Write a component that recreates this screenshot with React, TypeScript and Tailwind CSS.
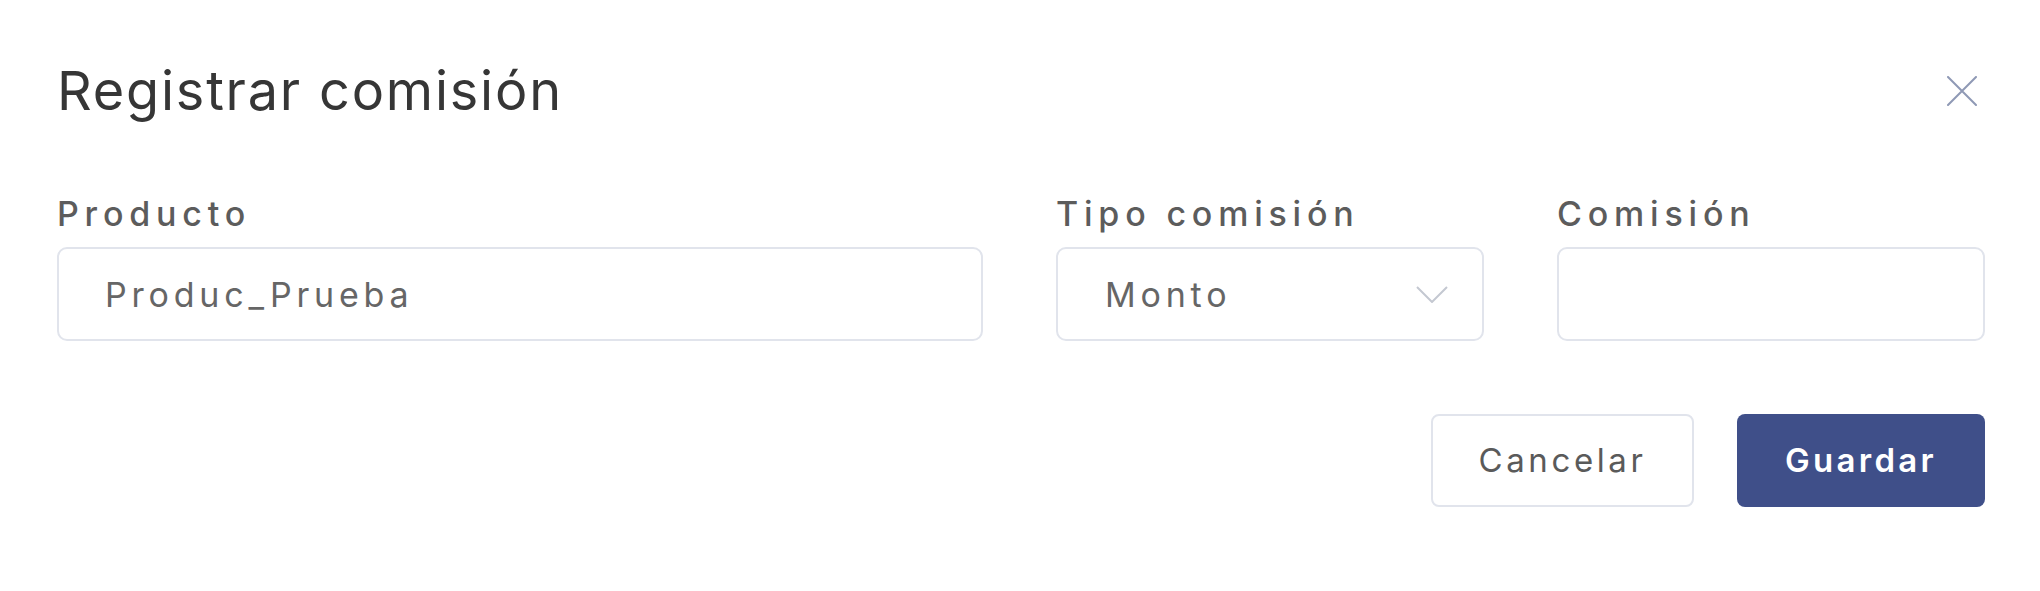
import React from "react";

export default function App() {
  const font = "font-['Inter','Noto_Sans',sans-serif]";
  return (
    <div className={`w-full h-[591px] bg-white pl-[57px] pr-[55px] pt-[59px] ${font}`}>
      <div className="flex items-center justify-between">
        <h1 className="text-[54px] leading-[64px] font-normal text-[#363636] tracking-[1.8px]">
          Registrar comisión
        </h1>
        <button className="w-[30px] h-[30px] mr-[8px] flex items-center justify-center" aria-label="Cerrar">
          <svg width="30" height="30" viewBox="0 0 30 30" fill="none">
            <path d="M1 1L29 29M29 1L1 29" stroke="#8f99b5" strokeWidth="2" strokeLinecap="round" />
          </svg>
        </button>
      </div>

      <div className="mt-[71px] grid grid-cols-[1fr_428px_428px] gap-x-[73px]">
        <div className="flex flex-col">
          <label className="text-[34px] leading-[40px] font-medium text-[#5c5c5c] tracking-[5.8px]">Producto</label>
          <div className="mt-[13px] h-[94px] rounded-[10px] border-2 border-[#e1e4ec] flex items-center pl-[46px]">
            <span className="text-[34px] text-[#666666] tracking-[4.8px]">Produc_Prueba</span>
          </div>
        </div>
        <div className="flex flex-col">
          <label className="text-[34px] leading-[40px] font-medium text-[#5c5c5c] tracking-[5.8px]">Tipo comisión</label>
          <div className="mt-[13px] h-[94px] rounded-[10px] border-2 border-[#e1e4ec] flex items-center justify-between pl-[47px] pr-[34px]">
            <span className="text-[34px] text-[#666666] tracking-[4.8px]">Monto</span>
            <svg width="32" height="17" viewBox="0 0 32 17" fill="none">
              <path d="M1 1L16 16L31 1" stroke="#c4c8d1" strokeWidth="2" />
            </svg>
          </div>
        </div>
        <div className="flex flex-col">
          <label className="text-[34px] leading-[40px] font-medium text-[#5c5c5c] tracking-[5.8px]">Comisión</label>
          <div className="mt-[13px] h-[94px] rounded-[10px] border-2 border-[#e1e4ec]" />
        </div>
      </div>

      <div className="mt-[73px] flex justify-end gap-[43px]">
        <button className="w-[263px] h-[93px] rounded-[8px] border-2 border-[#e1e4ec] bg-white text-[33px] text-[#5a5a5a] tracking-[3.6px]">
          Cancelar
        </button>
        <button className="w-[248px] h-[93px] rounded-[8px] bg-[#3f4f89] text-[33px] font-semibold text-white tracking-[3.3px]">
          Guardar
        </button>
      </div>
    </div>
  );
}
